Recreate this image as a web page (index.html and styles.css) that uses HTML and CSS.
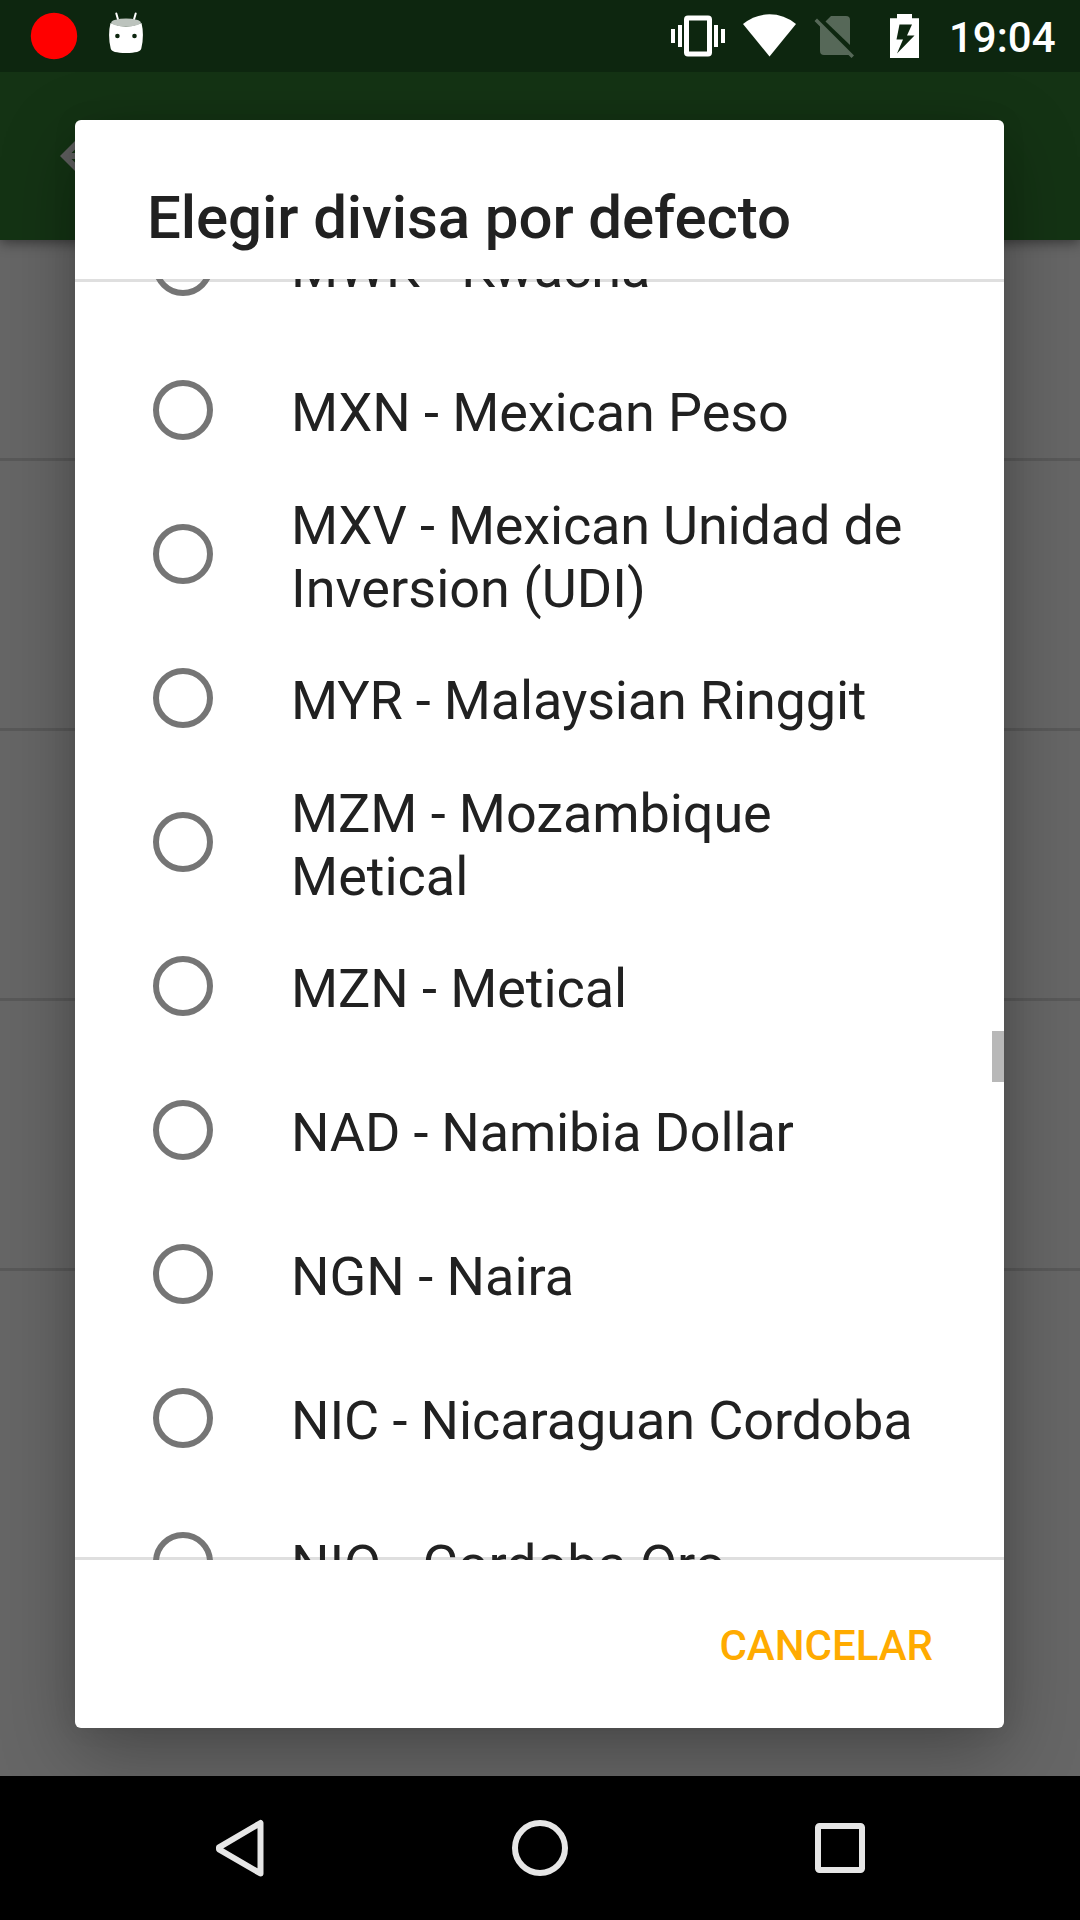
FILE: index.html
```html
<!DOCTYPE html>
<html lang="es">
<head>
<meta charset="utf-8">
<title>Elegir divisa por defecto</title>
<link rel="stylesheet" href="styles.css">
</head>
<body>
<div class="screen">
  <header class="status-bar">
    <svg class="status-left" width="180" height="72" viewBox="0 0 180 72">
      <circle cx="54" cy="36" r="23.2" fill="#f00"/>
      <path d="M116.3 13.5l2.3 8M135.7 13.5l-2.3 8" stroke="#fff" stroke-width="2" stroke-linecap="round"/>
      <path d="M110.5 23Q126 30 141.500 23Q144.500 35 141.300 48.500Q140.500 53 126 53Q111.500 53 110.700 48.500Q107.500 35 110.500 23z" fill="#fff"/>
      <ellipse cx="126" cy="22.500" rx="14.800" ry="4" fill="#bcc3bd"/>
      <circle cx="117.400" cy="36" r="2.300" fill="#0d260f"/>
      <circle cx="134.500" cy="36" r="2.300" fill="#0d260f"/>
    </svg>
    <div class="status-right">
      <svg width="260" height="72" viewBox="660 0 260 72">
        <g fill="#fff">
          <path d="M671 29h4v14h-4zM678 25h4v22h-4zM714 25h4v22h-4zM721 29h4v14h-4z"/>
          <path fill-rule="evenodd" d="M688 15.500h20a4 4 0 0 1 4 4v33a4 4 0 0 1-4 4h-20a4 4 0 0 1-4-4v-33a4 4 0 0 1 4-4zM689 20.500v31h18v-31z"/>
          <path d="M743 24Q755 14.300 769.500 14.300Q784 14.300 796 24L769.500 56.500z"/>
          <path fill-rule="evenodd" d="M897 14h15v4.300h7v39.700h-29v-39.700h7zM899.500 24.500l-3 15h6.500l-6 14 17.500-18h-7.500l5-11z"/>
        </g>
        <g fill="#566858">
          <path d="M831 16h15a4 4 0 0 1 4 4v25L825.500 21.500z"/>
          <path d="M817 18.500l-2.500 2.500 5.500 5.500V51a4 4 0 0 0 4 4h24.500l3 3 2.500-2.500z"/>
        </g>
      </svg>
      <span class="clock">19:04</span>
    </div>
  </header>
  <div class="app-bar">
    <svg width="48" height="48" viewBox="0 0 48 48"><path d="M48 21H11.500L28.300 4.200 24 0 0 24l24 24 4.300-4.200L11.500 27H48z" fill="#5f5f5f"/></svg>
  </div>
  <main class="settings">
    <div class="setting setting-first"></div>
    <div class="setting"></div>
    <div class="setting"></div>
    <div class="setting"></div>
  </main>
  <nav class="nav-bar">
    <svg width="1080" height="144" viewBox="0 0 1080 144" fill="none" stroke="#e6e6e6" stroke-width="6" stroke-linejoin="round">
      <path d="M219 71.300L260.500 47V97.500L219 73.300z"/>
      <circle cx="540" cy="72" r="25"/>
      <rect x="818" y="50" width="44" height="44" rx="1.500"/>
    </svg>
  </nav>
  <section class="dialog">
    <h1 class="dialog-title">Elegir divisa por defecto</h1>
    <div class="list">
      <div class="options">
        <div class="option snug"><i class="radio"></i><span>MWK - Kwacha</span></div>
        <div class="option snug"><i class="radio"></i><span>MXN - Mexican Peso</span></div>
        <div class="option two-line tight"><i class="radio"></i><span>MXV - Mexican Unidad de Inversion (UDI)</span></div>
        <div class="option tight"><i class="radio"></i><span>MYR - Malaysian Ringgit</span></div>
        <div class="option two-line snug"><i class="radio"></i><span>MZM - Mozambique Metical</span></div>
        <div class="option snug"><i class="radio"></i><span>MZN - Metical</span></div>
        <div class="option tight"><i class="radio"></i><span>NAD - Namibia Dollar</span></div>
        <div class="option"><i class="radio"></i><span>NGN - Naira</span></div>
        <div class="option snug"><i class="radio"></i><span>NIC - Nicaraguan Cordoba</span></div>
        <div class="option snug"><i class="radio"></i><span>NIO - Cordoba Oro</span></div>
      </div>
      <div class="scroll-thumb"></div>
    </div>
    <div class="actions"><button class="cancel">CANCELAR</button></div>
  </section>
</div>
</body>
</html>
```
FILE: styles.css
```css
* { box-sizing: border-box; }
body { margin: 0; background: #000; font-family: Roboto, sans-serif; }
.screen { position: relative; display: flex; flex-direction: column; width: 1080px; height: 1920px; overflow: hidden; }
.status-bar { position: relative; z-index: 2; display: flex; justify-content: space-between; height: 72px; background: #0d260f; color: #fff; }
.status-right { display: flex; }
.clock { width: 160px; padding-left: 29px; font-size: 42px; font-weight: 500; line-height: 76px; }
.app-bar { position: relative; height: 168px; padding: 60px 0 0 60px; background: #143314; box-shadow: 0 3px 12px rgba(0, 0, 0, .45); }
.app-bar svg { display: block; }
.settings { height: 1536px; background: #666; }
.setting { height: 270px; border-bottom: 3px solid #595959; }
.setting-first { height: 221px; }
.nav-bar { position: relative; z-index: 2; height: 144px; background: #000; }
.nav-bar svg { display: block; }

/* The dialog floats above the dimmed settings screen */
.dialog { position: absolute; z-index: 1; left: 75px; top: 120px; display: flex; flex-direction: column; width: 929px; height: 1608px; background: #fff; border-radius: 6px; color: #212121; box-shadow: 0 24px 76px rgba(0, 0, 0, .3), 0 0 24px rgba(0, 0, 0, .08); }
.dialog-title { height: 159px; margin: 0; padding: 63px 72px 0; font-size: 60px; font-weight: 500; line-height: 70px; letter-spacing: -.09px; white-space: nowrap; }
.list { position: relative; height: 1281px; overflow: hidden; background: linear-gradient(#dfdfdf, #dfdfdf) top / 100% 3px no-repeat, linear-gradient(#dfdfdf, #dfdfdf) bottom / 100% 3px no-repeat; }
.options { margin-top: -85px; }
.option { display: flex; align-items: center; gap: 78px; height: 144px; padding: 0 72px 0 78px; font-size: 54px; line-height: 63px; }
.option span { padding-top: 4px; }
.two-line span { padding-top: 6px; }
.snug span::first-line { letter-spacing: -.08px; }
.tight span::first-line { letter-spacing: -.17px; }
.radio { flex: none; width: 60px; height: 60px; border: 6px solid #757575; border-radius: 50%; }
.scroll-thumb { position: absolute; right: 0; top: 752px; width: 12px; height: 51px; background: #b8b8b8; }
.actions { display: flex; flex: 1; justify-content: flex-end; padding: 0 71px 0; }
.cancel { height: 168px; padding: 2px 0 0; border: 0; background: none; color: #ffab00; font: 500 42px Roboto, sans-serif; }
```
